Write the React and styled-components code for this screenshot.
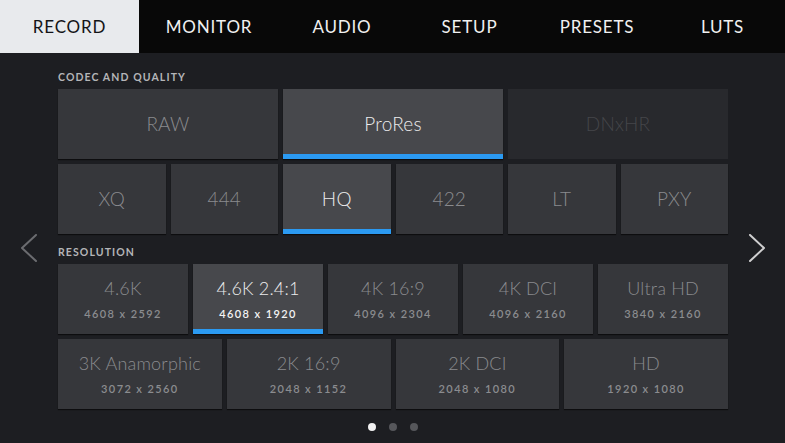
import React from "react";
import styled, { createGlobalStyle, css } from "styled-components";

const Global = createGlobalStyle`
  html, body { margin: 0; padding: 0; background: #1d1e22; }
  body { font-family: Lato, "Open Sans", sans-serif; }
  * { box-sizing: border-box; }
`;

const Screen = styled.div`
  width: 785px;
  height: 443px;
  background: #1d1e22;
  display: flex;
  flex-direction: column;
  overflow: hidden;
`;

const TabBar = styled.nav`
  height: 53px;
  flex: 0 0 53px;
  background: #080808;
  display: flex;
`;

const Tab = styled.div`
  flex: 0 0 ${(p) => p.$w}px;
  display: flex;
  align-items: center;
  justify-content: center;
  font-size: 17px;
  letter-spacing: 0.8px;
  font-weight: 400;
  color: ${(p) => (p.$active ? "#131417" : "#f1f1f1")};
  background: ${(p) => (p.$active ? "#e8eaed" : "transparent")};
  white-space: nowrap;
`;

const Body = styled.div`
  flex: 1;
  display: flex;
  align-items: stretch;
`;

const ArrowCol = styled.div`
  width: ${(p) => p.$w}px;
  flex: 0 0 ${(p) => p.$w}px;
  display: flex;
  align-items: center;
  justify-content: center;
`;

const Main = styled.div`
  flex: 1;
  display: flex;
  flex-direction: column;
  padding-top: 18px;
`;

const SectionLabel = styled.div`
  height: 12px;
  line-height: 12px;
  font-size: 10.5px;
  font-weight: 700;
  letter-spacing: 1.1px;
  color: #b4b5b8;
  margin-bottom: 6px;
  margin-top: ${(p) => p.$mt || 0}px;
`;

const Row = styled.div`
  display: grid;
  grid-template-columns: repeat(${(p) => p.$cols}, 1fr);
  gap: 5px;
  height: 70px;
  margin-bottom: ${(p) => p.$mb || 0}px;
`;

const Tile = styled.div`
  position: relative;
  display: flex;
  flex-direction: column;
  align-items: center;
  justify-content: center;
  padding-bottom: 2px;
  background: #36373b;
  box-shadow: 0 1px 1px rgba(0, 0, 0, 0.55);
  color: #8a8b8e;
  ${(p) =>
    p.$active &&
    css`
      background: #47484c;
      color: #ececec;
    `}
  ${(p) =>
    p.$disabled &&
    css`
      background: #28292d;
      color: #45464a;
      box-shadow: none;
    `}
`;

const TileTitle = styled.div`
  font-size: ${(p) => p.$size}px;
  font-weight: 300;
  line-height: ${(p) => p.$size + 4}px;
  letter-spacing: 0.2px;
  white-space: nowrap;
`;

const TileSub = styled.div`
  margin-top: 9px;
  font-size: 11px;
  font-weight: 600;
  line-height: 12px;
  letter-spacing: 1.4px;
  white-space: nowrap;
  color: ${(p) => (p.$active ? "#f4f4f4" : "#8b8c8f")};
`;

const ActiveBar = styled.div`
  position: absolute;
  left: 0;
  right: 0;
  bottom: 0;
  height: 5px;
  background: #2b9af2;
`;

const Dots = styled.div`
  display: flex;
  justify-content: center;
  gap: 13px;
  margin-top: 14px;
`;

const Dot = styled.span`
  width: 8px;
  height: 8px;
  border-radius: 50%;
  background: ${(p) => (p.$active ? "#f2f2f2" : "#56575b")};
`;

const Chevron = ({ dir, color }) => (
  <svg width="18" height="28" viewBox="0 0 18 28">
    <polyline
      points={dir === "left" ? "16,1 2,14 16,27" : "2,1 16,14 2,27"}
      fill="none"
      stroke={color}
      strokeWidth="2"
      strokeLinecap="round"
      strokeLinejoin="round"
    />
  </svg>
);

const tabs = [
  { t: "RECORD", w: 139 },
  { t: "MONITOR", w: 140 },
  { t: "AUDIO", w: 126 },
  { t: "SETUP", w: 129 },
  { t: "PRESETS", w: 126 },
  { t: "LUTS", w: 125 },
];
const codecs = [
  { t: "RAW" },
  { t: "ProRes", active: true },
  { t: "DNxHR", disabled: true },
];
const quality = [
  { t: "XQ" },
  { t: "444" },
  { t: "HQ", active: true },
  { t: "422" },
  { t: "LT" },
  { t: "PXY" },
];
const res1 = [
  { t: "4.6K", s: "4608 x 2592" },
  { t: "4.6K 2.4:1", s: "4608 x 1920", active: true },
  { t: "4K 16:9", s: "4096 x 2304" },
  { t: "4K DCI", s: "4096 x 2160" },
  { t: "Ultra HD", s: "3840 x 2160" },
];
const res2 = [
  { t: "3K Anamorphic", s: "3072 x 2560" },
  { t: "2K 16:9", s: "2048 x 1152" },
  { t: "2K DCI", s: "2048 x 1080" },
  { t: "HD", s: "1920 x 1080" },
];

const renderTiles = (items, size) =>
  items.map((it) => (
    <Tile key={it.t} $active={it.active} $disabled={it.disabled}>
      <TileTitle $size={size}>{it.t}</TileTitle>
      {it.s && <TileSub $active={it.active}>{it.s}</TileSub>}
      {it.active && <ActiveBar />}
    </Tile>
  ));

export default function App() {
  return (
    <>
      <Global />
      <Screen>
        <TabBar>
          {tabs.map((t, i) => (
            <Tab key={t.t} $w={t.w} $active={i === 0}>
              {t.t}
            </Tab>
          ))}
        </TabBar>
        <Body>
          <ArrowCol $w={58}>
            <Chevron dir="left" color="#6b6c70" />
          </ArrowCol>
          <Main>
            <SectionLabel>CODEC AND QUALITY</SectionLabel>
            <Row $cols={3} $mb={5}>
              {renderTiles(codecs, 19)}
            </Row>
            <Row $cols={6}>{renderTiles(quality, 19)}</Row>
            <SectionLabel $mt={12}>RESOLUTION</SectionLabel>
            <Row $cols={5} $mb={5}>
              {renderTiles(res1, 18)}
            </Row>
            <Row $cols={4}>{renderTiles(res2, 18)}</Row>
            <Dots>
              <Dot $active />
              <Dot />
              <Dot />
            </Dots>
          </Main>
          <ArrowCol $w={57}>
            <Chevron dir="right" color="#cfcfd0" />
          </ArrowCol>
        </Body>
      </Screen>
    </>
  );
}
